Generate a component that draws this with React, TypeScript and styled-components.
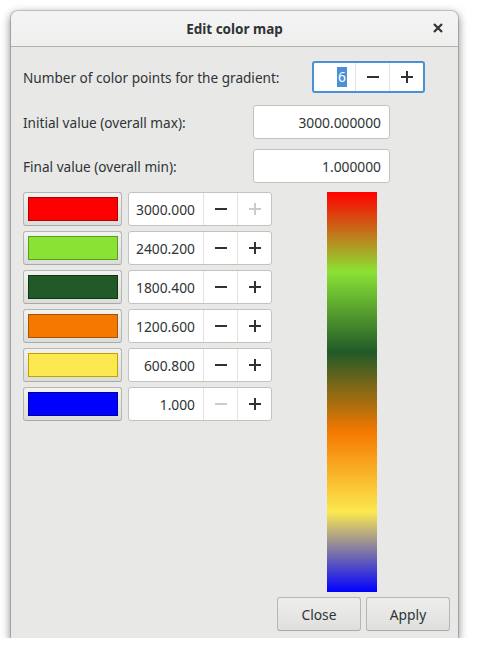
import React from "react";
import styled, { createGlobalStyle } from "styled-components";

const Global = createGlobalStyle`
  html, body { margin: 0; padding: 0; background: #ffffff; }
  body { font-family: "Noto Sans", "DejaVu Sans", sans-serif; color: #2e3436; }
`;

const Dialog = styled.div`
  margin: 11px 0 0 11px;
  width: 447px;
  height: 627px;
  background: #e8e8e7;
  border-radius: 7px 7px 0 0;
  box-shadow: 0 3px 9px 1px rgba(0, 0, 0, 0.45), 0 0 0 1px rgba(0, 0, 0, 0.16);
  display: flex;
  flex-direction: column;
  overflow: hidden;
`;

const TitleBar = styled.div`
  height: 35px;
  flex: none;
  display: flex;
  align-items: center;
  justify-content: center;
  position: relative;
  background: linear-gradient(#f4f4f4, #efefee);
  border-bottom: 1px solid #b1b1ae;
  border-radius: 7px 7px 0 0;
`;

const Title = styled.div`
  font-weight: bold;
  font-size: 13.5px;
  color: #2e3436;
`;

const CloseX = styled.div`
  position: absolute;
  right: 12px;
  top: 9px;
  width: 16px;
  height: 16px;
  display: flex;
  align-items: center;
  justify-content: center;
`;

const Body = styled.div`
  flex: 1;
  display: flex;
  flex-direction: column;
  padding: 14px 0 0 12px;
`;

const FieldRow = styled.div<{ $right: number; $mb: number }>`
  display: flex;
  align-items: center;
  justify-content: space-between;
  padding-right: ${(p) => p.$right}px;
  margin-bottom: ${(p) => p.$mb}px;
`;

const Label = styled.div`
  font-size: 13.6px;
  color: #2e3436;
`;

const Entry = styled.div`
  box-sizing: border-box;
  width: 137px;
  height: 34px;
  background: #ffffff;
  border: 1px solid #c2c2bf;
  border-radius: 3px;
  display: flex;
  align-items: center;
  justify-content: flex-end;
  padding-right: 8px;
  font-size: 13.8px;
  color: #2e3436;
`;

const Spin = styled.div<{ $w: number; $focus?: boolean }>`
  box-sizing: border-box;
  width: ${(p) => p.$w}px;
  height: ${(p) => (p.$focus ? 32 : 34)}px;
  background: #ffffff;
  border: ${(p) => (p.$focus ? "2px solid #4a90d9" : "1px solid #c2c2bf")};
  border-radius: 3px;
  display: flex;
  align-items: stretch;
`;

const SpinText = styled.div`
  flex: 1;
  display: flex;
  align-items: center;
  justify-content: flex-end;
  padding-right: 8px;
  font-size: 13.8px;
  color: #2e3436;
`;

const Selected = styled.span`
  background: #4a90d9;
  color: #ffffff;
  line-height: 20px;
  padding: 0 1px;
`;

const SpinBtn = styled.div<{ $w: number; $disabled?: boolean }>`
  width: ${(p) => p.$w}px;
  flex: none;
  border-left: 1px solid #e2e2e0;
  display: flex;
  align-items: center;
  justify-content: center;
  color: ${(p) => (p.$disabled ? "#c9cccc" : "#2e3436")};
`;

const Lower = styled.div`
  display: flex;
  align-items: flex-start;
  margin-top: 9px;
`;

const PointList = styled.div`
  display: flex;
  flex-direction: column;
  gap: 5px;
  width: 249px;
`;

const PointRow = styled.div`
  display: flex;
  gap: 6px;
`;

const ColorButton = styled.div`
  box-sizing: border-box;
  width: 99px;
  height: 34px;
  border: 1px solid #b6b6b3;
  border-bottom-color: #a9a9a6;
  border-radius: 3px;
  background: linear-gradient(#f2f2f1, #dcdcda);
  display: flex;
  align-items: center;
  justify-content: center;
`;

const Swatch = styled.div<{ $c: string; $b: string }>`
  box-sizing: border-box;
  width: 90px;
  height: 24px;
  background: ${(p) => p.$c};
  border: 1px solid ${(p) => p.$b};
`;

const GradientBar = styled.div`
  margin-left: 55px;
  width: 50px;
  height: 400px;
  background: linear-gradient(
    to bottom,
    #ff0000 0%,
    #8ae234 20%,
    #215a28 40%,
    #f57900 60%,
    #fce94f 80%,
    #0000ff 100%
  );
`;

const ButtonRow = styled.div`
  display: flex;
  justify-content: flex-end;
  gap: 5px;
  padding-right: 8px;
  margin-top: 5px;
`;

const PushButton = styled.div`
  box-sizing: border-box;
  width: 84px;
  height: 34px;
  border: 1px solid #b6b6b3;
  border-bottom-color: #a9a9a6;
  border-radius: 3px;
  background: linear-gradient(#eeeeed, #dfdfdd);
  display: flex;
  align-items: center;
  justify-content: center;
  font-size: 13.8px;
  color: #2e3436;
`;

const Minus = ({ color = "currentColor" }: { color?: string }) => (
  <svg width="12" height="12" viewBox="0 0 12 12">
    <rect x="0" y="5" width="12" height="2" fill={color} />
  </svg>
);

const Plus = ({ color = "currentColor" }: { color?: string }) => (
  <svg width="12" height="12" viewBox="0 0 12 12">
    <rect x="0" y="5" width="12" height="2" fill={color} />
    <rect x="5" y="0" width="2" height="12" fill={color} />
  </svg>
);

const points = [
  { v: "3000.000", c: "#ff0000", b: "#b00000", minusOff: false, plusOff: true },
  { v: "2400.200", c: "#8ae234", b: "#5c9e1c", minusOff: false, plusOff: false },
  { v: "1800.400", c: "#215a28", b: "#0f3514", minusOff: false, plusOff: false },
  { v: "1200.600", c: "#f57900", b: "#a85300", minusOff: false, plusOff: false },
  { v: "600.800", c: "#fce94f", b: "#c4a000", minusOff: false, plusOff: false },
  { v: "1.000", c: "#0000ff", b: "#0000a0", minusOff: true, plusOff: false },
];

export default function App() {
  return (
    <>
      <Global />
      <Dialog>
        <TitleBar>
          <Title>Edit color map</Title>
          <CloseX>
            <svg width="10" height="10" viewBox="0 0 10 10">
              <path d="M1 1 L9 9 M9 1 L1 9" stroke="#2e3436" strokeWidth="2.2" strokeLinecap="butt" />
            </svg>
          </CloseX>
        </TitleBar>
        <Body>
          <FieldRow $right={33} $mb={12}>
            <Label>Number of color points for the gradient:</Label>
            <Spin $w={113} $focus>
              <SpinText>
                <Selected>6</Selected>
              </SpinText>
              <SpinBtn $w={33}>
                <Minus />
              </SpinBtn>
              <SpinBtn $w={33}>
                <Plus />
              </SpinBtn>
            </Spin>
          </FieldRow>
          <FieldRow $right={68} $mb={10}>
            <Label>Initial value (overall max):</Label>
            <Entry>3000.000000</Entry>
          </FieldRow>
          <FieldRow $right={68} $mb={0}>
            <Label>Final value (overall min):</Label>
            <Entry>1.000000</Entry>
          </FieldRow>
          <Lower>
            <PointList>
              {points.map((p) => (
                <PointRow key={p.v}>
                  <ColorButton>
                    <Swatch $c={p.c} $b={p.b} />
                  </ColorButton>
                  <Spin $w={144}>
                    <SpinText>{p.v}</SpinText>
                    <SpinBtn $w={33} $disabled={p.minusOff}>
                      <Minus />
                    </SpinBtn>
                    <SpinBtn $w={33} $disabled={p.plusOff}>
                      <Plus />
                    </SpinBtn>
                  </Spin>
                </PointRow>
              ))}
            </PointList>
            <GradientBar />
          </Lower>
          <ButtonRow>
            <PushButton>Close</PushButton>
            <PushButton>Apply</PushButton>
          </ButtonRow>
        </Body>
      </Dialog>
    </>
  );
}
